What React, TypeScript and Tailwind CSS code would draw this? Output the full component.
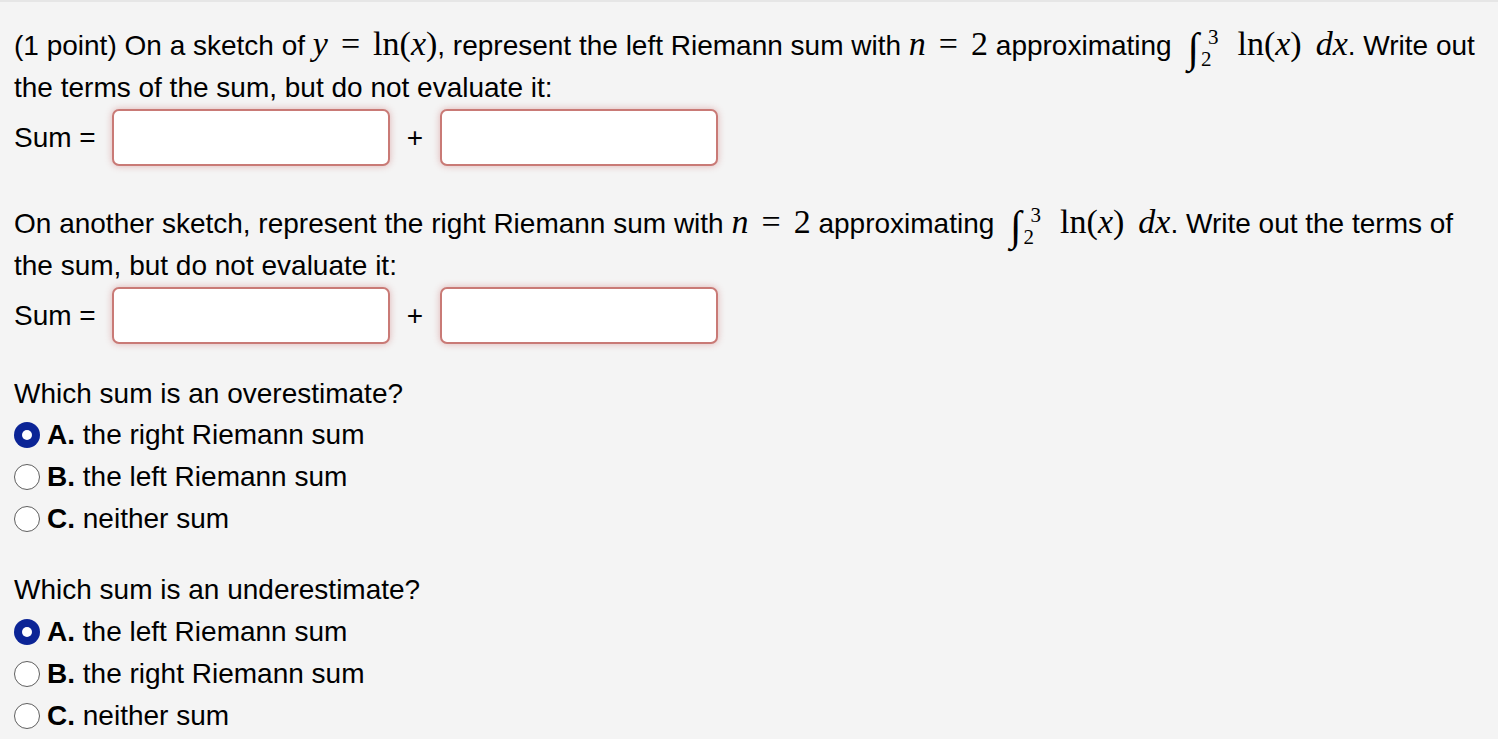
import React from "react"

const serif = "font-['Liberation_Serif','Times_New_Roman',serif]"

function V({ children }: { children: React.ReactNode }) {
  return <span className={`${serif} italic text-[34px] leading-none`}>{children}</span>
}

function R({ children }: { children: React.ReactNode }) {
  return <span className={`${serif} text-[34px] leading-none`}>{children}</span>
}

function Eq() {
  return <span className={`${serif} text-[34px] leading-none mx-[13px]`}>=</span>
}

// small integral with limits 2 to 3
function Integral() {
  return (
    <span className={`${serif} ml-[8px] mr-[19px] inline-flex items-center align-middle leading-none`}>
      <span className="text-[42px] italic">∫</span>
      <span className="ml-[2px] flex flex-col text-[21px] leading-[22px]">
        <span className="ml-[7px]">3</span>
        <span>2</span>
      </span>
    </span>
  )
}

function IntegralExpr() {
  return (
    <>
      <Integral />
      <R>ln(</R>
      <V>x</V>
      <R>)</R>
      <span className="inline-block w-[14px]" />
      <V>dx</V>
    </>
  )
}

function SumRow() {
  return (
    <div className="flex h-[57px] items-center">
      <span>Sum =</span>
      <input
        type="text"
        className="ml-[16px] h-[57px] w-[278px] rounded-[7px] border-2 border-[#c97a76] bg-white shadow-[0_0_7px_rgba(200,100,100,0.45)] outline-none"
      />
      <span className="mx-[17px]">+</span>
      <input
        type="text"
        className="h-[57px] w-[278px] rounded-[7px] border-2 border-[#c97a76] bg-white shadow-[0_0_7px_rgba(200,100,100,0.45)] outline-none"
      />
    </div>
  )
}

function Radio({ checked, letter, label }: { checked?: boolean; letter: string; label: string }) {
  return (
    <div className="flex h-[42px] items-center">
      {checked ? (
        <span className="flex h-[26px] w-[26px] items-center justify-center rounded-full bg-[#0b2496]">
          <span className="h-[10px] w-[10px] rounded-full bg-white" />
        </span>
      ) : (
        <span className="h-[26px] w-[26px] rounded-full border-[1.5px] border-[#5f5f5f] bg-white" />
      )}
      <span className="ml-[7px]">
        <b>{letter}</b> {label}
      </span>
    </div>
  )
}

export default function App() {
  return (
    <div className="min-h-screen border-t-2 border-[#e6e6e6] bg-[#f4f4f4] pl-[14px] pt-[23px] font-['Liberation_Sans',Arial,sans-serif] text-[28px] text-black">
      <div className="h-[42px] whitespace-nowrap leading-[42px]">
        (1 point) On a sketch of <V>y</V>
        <Eq />
        <R>ln(</R>
        <V>x</V>
        <R>)</R>, represent the left Riemann sum with <V>n</V>
        <Eq />
        <R>2</R> approximating <IntegralExpr />. Write out
      </div>
      <div className="leading-[42px]">the terms of the sum, but do not evaluate it:</div>
      <div>
        <SumRow />
      </div>

      <div className="mt-[37px] h-[42px] whitespace-nowrap leading-[42px]">
        On another sketch, represent the right Riemann sum with <V>n</V>
        <Eq />
        <R>2</R> approximating <IntegralExpr />. Write out the terms of
      </div>
      <div className="leading-[42px]">the sum, but do not evaluate it:</div>
      <div>
        <SumRow />
      </div>

      <div className="mt-[29px] leading-[42px]">Which sum is an overestimate?</div>
      <div className="-mt-px">
        <Radio checked letter="A." label="the right Riemann sum" />
        <Radio letter="B." label="the left Riemann sum" />
        <Radio letter="C." label="neither sum" />
      </div>

      <div className="mt-[29px] leading-[42px]">Which sum is an underestimate?</div>
      <Radio checked letter="A." label="the left Riemann sum" />
      <Radio letter="B." label="the right Riemann sum" />
      <Radio letter="C." label="neither sum" />
    </div>
  )
}
